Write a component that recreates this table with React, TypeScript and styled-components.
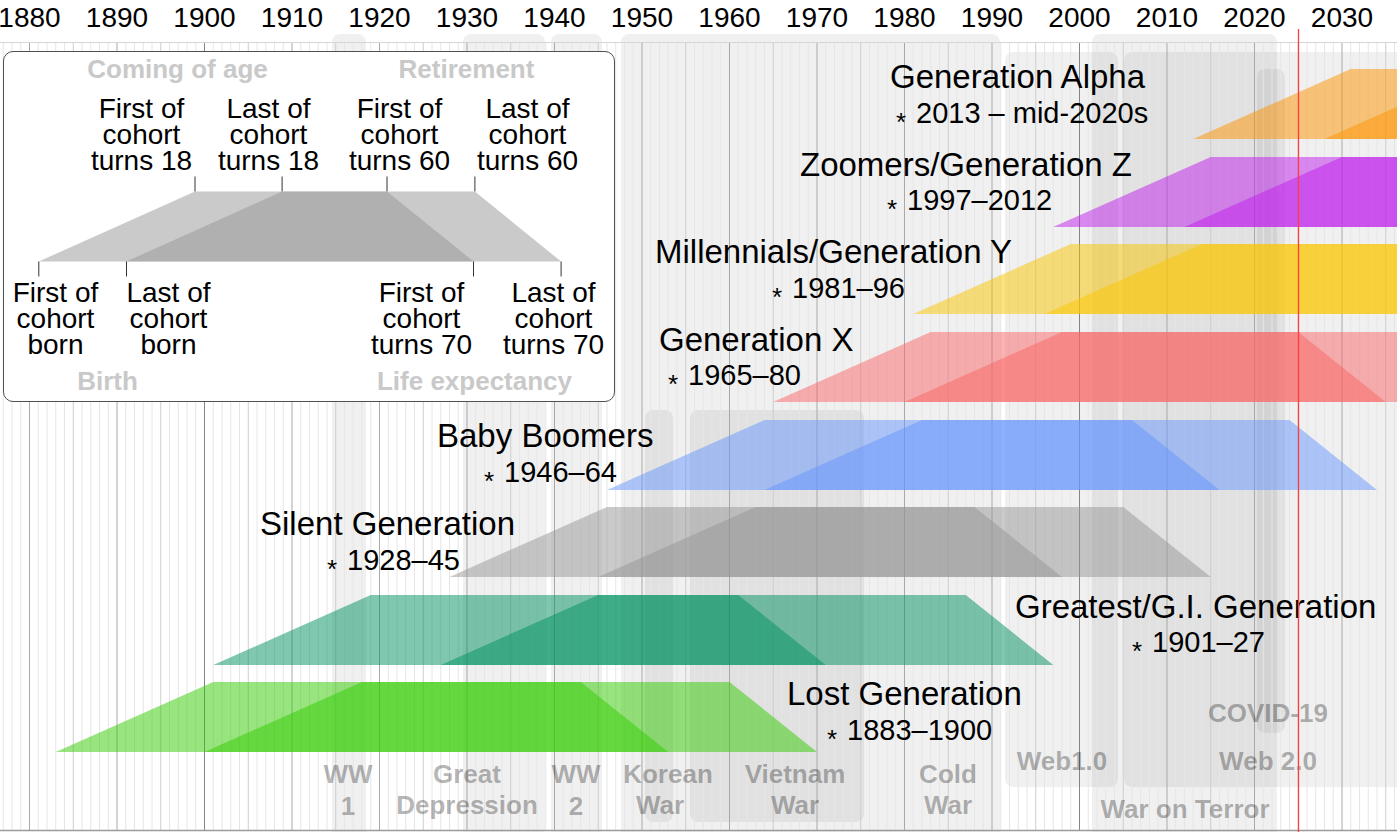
import React from 'react';
import styled, { createGlobalStyle } from 'styled-components';

const W = 1397;
const H = 832;
// pixel position of a year on the time axis
const X = (year: number) => 204.5 + (year - 1900) * 8.75;
const BAND_H = 70;

const GlobalStyle = createGlobalStyle`
  html, body { margin: 0; padding: 0; background: #fff; overflow: hidden; }
  body { font-family: "Liberation Sans", Arial, sans-serif; }
`;

const Page = styled.div`
  position: relative;
  width: ${W}px;
  height: ${H}px;
  overflow: hidden;
  background: #fff;
`;

const Chart = styled.svg`
  display: block;
  font-family: "Liberation Sans", Arial, sans-serif;
`;

const EventBand = styled.rect`
  fill: #000;
  fill-opacity: 0.06;
`;

type LineKind = 'year' | 'five' | 'decade' | 'century';
const lineColors: Record<LineKind, string> = {
  year: '#e6e6e6',
  five: '#cdcdcd',
  decade: '#a9a9a9',
  century: '#858585',
};

const GridLine = styled.line<{ $kind: LineKind }>`
  stroke: ${p => lineColors[p.$kind]};
  stroke-width: 1;
`;

const AxisRule = styled.line<{ $dark?: boolean }>`
  stroke: ${p => (p.$dark ? '#9a9a9a' : '#d6d6d6')};
  stroke-width: ${p => (p.$dark ? 1.5 : 1)};
`;

const NowLine = styled.line`
  stroke: #ff3d3d;
  stroke-width: 1.3;
`;

const YearLabel = styled.text`
  font-size: 28px;
  text-anchor: middle;
  fill: #000;
`;

const Cohort = styled.polygon<{ $color: string }>`
  fill: ${p => p.$color};
  fill-opacity: 0.5;
`;

const GenTitle = styled.text`
  font-size: 33px;
  fill: #000;
`;

const GenDate = styled.text`
  font-size: 29px;
  fill: #000;
`;

const Star = styled.text`
  font-size: 26px;
  text-anchor: middle;
  fill: #000;
`;

const EventLabel = styled.text`
  font-size: 26px;
  font-weight: bold;
  text-anchor: middle;
  fill: #000;
  fill-opacity: 0.3;
`;

const LegendCard = styled.div`
  position: absolute;
  left: 3px;
  top: 51px;
  width: 612px;
  height: 351px;
  box-sizing: border-box;
  border: 1.5px solid #505050;
  border-radius: 10px;
  background: #fff;
  overflow: hidden;
`;

const LegendArt = styled.svg`
  display: block;
  font-family: "Liberation Sans", Arial, sans-serif;
`;

const LegendCaption = styled.text`
  font-size: 26px;
  font-weight: bold;
  text-anchor: middle;
  fill: #c9c9c9;
`;

const LegendNote = styled.text`
  font-size: 28px;
  text-anchor: middle;
  fill: #000;
`;

const Tick = styled.line`
  stroke: #333;
  stroke-width: 1;
`;

const LegendShape = styled.polygon`
  fill: #959595;
  fill-opacity: 0.5;
`;

interface Generation {
  name: string;
  born: string;
  start: number;
  end: number;
  color: string;
  top: number;
  title: [number, number];
  date: [number, number];
}

const generations: Generation[] = [
  { name: 'Generation Alpha', born: '2013 – mid-2020s', start: 2013, end: 2028, color: '#fd9300', top: 69, title: [890, 88], date: [916, 123] },
  { name: 'Zoomers/Generation Z', born: '1997–2012', start: 1997, end: 2012, color: '#bf1eec', top: 157, title: [800, 176], date: [907, 210] },
  { name: 'Millennials/Generation Y', born: '1981–96', start: 1981, end: 1996, color: '#fac500', top: 244, title: [655, 263], date: [792, 298] },
  { name: 'Generation X', born: '1965–80', start: 1965, end: 1980, color: '#fa6666', top: 332, title: [659, 351], date: [688, 385] },
  { name: 'Baby Boomers', born: '1946–64', start: 1946, end: 1964, color: '#6695fb', top: 420, title: [437, 447], date: [504, 482] },
  { name: 'Silent Generation', born: '1928–45', start: 1928, end: 1945, color: '#969696', top: 507, title: [260, 535], date: [347, 570] },
  { name: 'Greatest/G.I. Generation', born: '1901–27', start: 1901, end: 1927, color: '#00925f', top: 595, title: [1015, 618], date: [1152, 652] },
  { name: 'Lost Generation', born: '1883–1900', start: 1883, end: 1900, color: '#31cc00', top: 682, title: [787, 705], date: [847, 740] },
];

// x1, x2, y1, y2 of the shaded periods
const bands: [number, number, number, number][] = [
  [332, 366, 34, 845], // WW1
  [463, 545, 34, 845], // Great Depression
  [551, 602, 34, 845], // WW2
  [621, 1000, 34, 845], // Cold War
  [645, 673, 410, 822], // Korean War
  [690, 864, 410, 822], // Vietnam War
  [1005, 1118, 52, 787], // Web 1.0
  [1092, 1277, 34, 845], // War on Terror
  [1124, 1415, 52, 787], // Web 2.0
  [1257, 1285, 69, 733], // COVID-19
];

const events: { lines: string[]; x: number[]; y: number[] }[] = [
  { lines: ['WW', '1'], x: [348, 348], y: [783, 815] },
  { lines: ['Great', 'Depression'], x: [467, 467], y: [783, 814] },
  { lines: ['WW', '2'], x: [576, 576], y: [783, 815] },
  { lines: ['Korean', 'War'], x: [668, 660], y: [783, 814] },
  { lines: ['Vietnam', 'War'], x: [795, 795], y: [783, 814] },
  { lines: ['Cold', 'War'], x: [948, 948], y: [783, 814] },
  { lines: ['Web1.0'], x: [1062], y: [770] },
  { lines: ['Web 2.0'], x: [1268], y: [770] },
  { lines: ['COVID-19'], x: [1268], y: [722] },
  { lines: ['War on Terror'], x: [1185], y: [818] },
];

const trapezoid = (born: number, top: number) => {
  const bottom = top + BAND_H;
  return `${X(born)},${bottom} ${X(born + 18)},${top} ${X(born + 60)},${top} ${X(born + 70)},${bottom}`;
};

const lineKind = (year: number): LineKind => {
  if (year % 100 === 0) return 'century';
  if (year % 10 === 0) return 'decade';
  if (year % 5 === 0) return 'five';
  return 'year';
};

const years: number[] = [];
for (let y = 1877; y <= 2036; y++) years.push(y);
const decades: number[] = [];
for (let y = 1880; y <= 2030; y += 10) decades.push(y);

const CohortNote = ({ x, y, lines }: { x: number; y: number; lines: string[] }) => (
  <LegendNote x={x} y={y}>
    {lines.map((l, i) => (
      <tspan key={i} x={x} dy={i === 0 ? 0 : 26}>
        {l}
      </tspan>
    ))}
  </LegendNote>
);

function Legend() {
  return (
    <LegendCard>
      <LegendArt width={609} height={348} viewBox="4.5 52.5 609 348">
        <LegendCaption x={178} y={78}>Coming of age</LegendCaption>
        <LegendCaption x={467} y={78}>Retirement</LegendCaption>

        <CohortNote x={142} y={118} lines={['First of', 'cohort', 'turns 18']} />
        <CohortNote x={269} y={118} lines={['Last of', 'cohort', 'turns 18']} />
        <CohortNote x={400} y={118} lines={['First of', 'cohort', 'turns 60']} />
        <CohortNote x={528} y={118} lines={['Last of', 'cohort', 'turns 60']} />

        {[195.5, 282.6, 387.5, 475.4].map(x => (
          <Tick key={x} x1={x} x2={x} y1={177} y2={192} />
        ))}
        <LegendShape points="39.3,262 195.5,192 387.5,192 474,262" />
        <LegendShape points="127,262 282.6,192 475.4,192 561.6,262" />
        {[39.3, 127, 474, 561.6].map(x => (
          <Tick key={x} x1={x} x2={x} y1={262} y2={277} />
        ))}

        <CohortNote x={56} y={302} lines={['First of', 'cohort', 'born']} />
        <CohortNote x={169} y={302} lines={['Last of', 'cohort', 'born']} />
        <CohortNote x={422} y={302} lines={['First of', 'cohort', 'turns 70']} />
        <CohortNote x={554} y={302} lines={['Last of', 'cohort', 'turns 70']} />

        <LegendCaption x={108} y={390}>Birth</LegendCaption>
        <LegendCaption x={475} y={390}>Life expectancy</LegendCaption>
      </LegendArt>
    </LegendCard>
  );
}

export default function App() {
  return (
    <Page>
      <GlobalStyle />
      <Chart width={W} height={H} viewBox={`0 0 ${W} ${H}`}>
        {bands.map(([x1, x2, y1, y2], i) => (
          <EventBand key={i} x={x1} y={y1} width={x2 - x1} height={y2 - y1} rx={8} />
        ))}

        {years.map(y => (
          <GridLine key={y} $kind={lineKind(y)} x1={X(y)} x2={X(y)} y1={42} y2={830} />
        ))}
        <AxisRule x1={0} x2={W} y1={42.5} y2={42.5} />
        <AxisRule $dark x1={0} x2={W} y1={830.5} y2={830.5} />

        {decades.map(y => (
          <YearLabel key={y} x={X(y)} y={27}>
            {y}
          </YearLabel>
        ))}

        {generations.map(g => (
          <g key={g.name}>
            <Cohort $color={g.color} points={trapezoid(g.start, g.top)} />
            <Cohort $color={g.color} points={trapezoid(g.end, g.top)} />
          </g>
        ))}

        {events.map((e, i) =>
          e.lines.map((l, j) => (
            <EventLabel key={`${i}-${j}`} x={e.x[j]} y={e.y[j]}>
              {l}
            </EventLabel>
          ))
        )}

        {generations.map(g => (
          <g key={g.name}>
            <GenTitle x={g.title[0]} y={g.title[1]}>
              {g.name}
            </GenTitle>
            <Star x={g.date[0] - 15} y={g.date[1] + 7.5}>
              *
            </Star>
            <GenDate x={g.date[0]} y={g.date[1]}>
              {g.born}
            </GenDate>
          </g>
        ))}

        <NowLine x1={1298.5} x2={1298.5} y1={29} y2={H} />
      </Chart>
      <Legend />
    </Page>
  );
}
